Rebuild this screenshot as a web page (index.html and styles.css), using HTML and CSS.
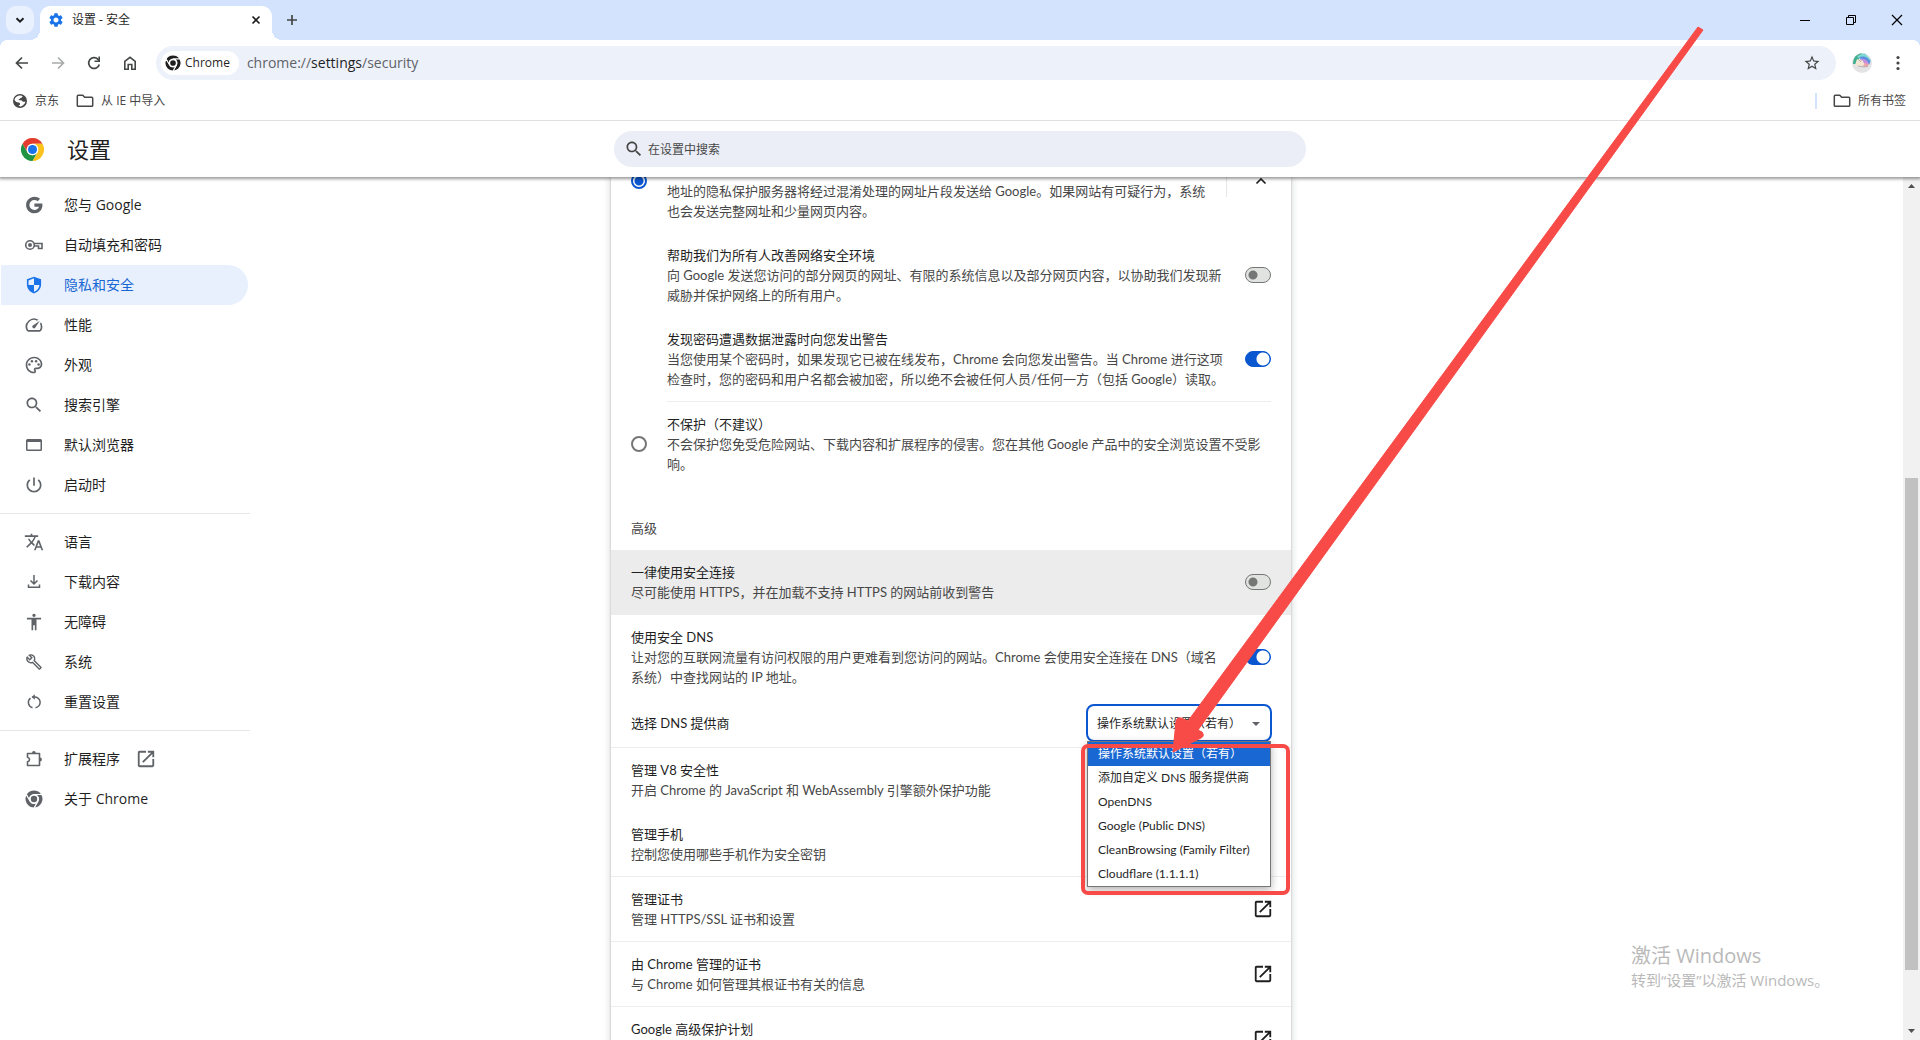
FILE: index.html
```html
<!DOCTYPE html>
<html lang="zh-CN">
<head>
<meta charset="utf-8">
<title>设置 - 安全</title>
<link rel="stylesheet" href="styles.css">
</head>
<body>
<svg class="sprite" aria-hidden="true">
  <symbol id="google" viewBox="0 0 24 24"><path d="M12.5 10.2v3.9h5.5c-.7 2.3-2.700 3.900-5.500 3.900a6 6 0 1 1 0-12c1.500 0 2.900.5 3.900 1.400l2.900-2.800A10 10 0 0 0 12.500 2C7 2 2.500 6.500 2.500 12s4.500 10 10 10c8.400 0 10.300-7.800 9.500-11.800z"/></symbol>
  <symbol id="key" viewBox="0 0 20 20"><g fill="none" stroke="currentColor" stroke-width="1.600"><circle cx="6" cy="10" r="4.300"/><path d="M10 8.500h8v5h-3.500v-2.500H10"/></g><circle cx="6" cy="10" r="2"/></symbol>
  <symbol id="shield" viewBox="0 0 24 24"><path d="M12 2 3.500 5.200v6.300c0 5 3.600 9.300 8.500 10.700 4.900-1.400 8.500-5.700 8.500-10.700V5.200zM12 12h6.600c-.5 3.800-3 7-6.600 8.200V12H5.400V6.500L12 4z"/></symbol>
  <symbol id="speed" viewBox="0 0 24 24"><path d="M20.380 8.570l-1.230 1.850a8 8 0 0 1-.22 7.580H5.070A8 8 0 0 1 15.580 6.850l1.850-1.230A10 10 0 0 0 3.350 19a2 2 0 0 0 1.720 1h13.850a2 2 0 0 0 1.740-1 10 10 0 0 0-.27-10.440zm-9.790 6.840a2 2 0 0 0 2.830 0l5.660-8.490-8.490 5.660a2 2 0 0 0 0 2.830z"/></symbol>
  <symbol id="palette" viewBox="0 0 24 24"><path d="M12 22C6.490 22 2 17.510 2 12S6.490 2 12 2s10 4.040 10 9c0 3.310-2.690 6-6 6h-1.770c-.28 0-.5.22-.5.5 0 .12.05.23.13.33.41.47.64 1.060.64 1.670 0 1.380-1.120 2.500-2.500 2.500zm0-18c-4.410 0-8 3.590-8 8s3.590 8 8 8c.28 0 .5-.22.5-.5a.54.54 0 0 0-.14-.35c-.41-.46-.63-1.050-.63-1.650 0-1.380 1.120-2.500 2.500-2.500H16c2.210 0 4-1.790 4-4 0-3.860-3.590-7-8-7z"/><circle cx="6.500" cy="11.500" r="1.500"/><circle cx="9.500" cy="7.500" r="1.500"/><circle cx="14.500" cy="7.500" r="1.500"/><circle cx="17.500" cy="11.500" r="1.500"/></symbol>
  <symbol id="search" viewBox="0 0 24 24"><path d="M15.500 14h-.79l-.28-.27C15.410 12.590 16 11.110 16 9.500 16 5.910 13.090 3 9.500 3S3 5.910 3 9.500 5.910 16 9.500 16c1.610 0 3.090-.59 4.230-1.570l.27.28v.79l5 4.990L20.490 19l-4.990-5zm-6 0C7.010 14 5 11.990 5 9.500S7.010 5 9.500 5 14 7.010 14 9.500 11.990 14 9.500 14z"/></symbol>
  <symbol id="window" viewBox="0 0 20 20"><path fill-rule="evenodd" d="M3.500 4h13A1.500 1.500 0 0 1 18 5.500v9a1.500 1.500 0 0 1-1.500 1.500h-13A1.500 1.500 0 0 1 2 14.500v-9A1.500 1.500 0 0 1 3.500 4zM3.500 7v7.500h13V7z"/></symbol>
  <symbol id="power" viewBox="0 0 24 24"><path d="M13 3h-2v10h2V3zm4.830 2.170l-1.420 1.420C17.990 7.860 19 9.810 19 12c0 3.870-3.130 7-7 7s-7-3.130-7-7c0-2.190 1.010-4.140 2.580-5.420L6.170 5.170C4.230 6.820 3 9.260 3 12c0 4.970 4.030 9 9 9s9-4.030 9-9c0-2.740-1.230-5.180-3.170-6.830z"/></symbol>
  <symbol id="translate" viewBox="0 0 24 24"><path d="M12.870 15.070l-2.540-2.510.03-.03c1.740-1.940 2.980-4.170 3.710-6.530H17V4h-7V2H8v2H1v1.990h11.170C11.500 7.920 10.440 9.750 9 11.350 8.070 10.320 7.300 9.190 6.690 8h-2c.73 1.630 1.730 3.170 2.980 4.560l-5.090 5.020L4 19l5-5 3.110 3.110.76-2.040zM18.500 10h-2L12 22h2l1.120-3h4.750L21 22h2l-4.500-12zm-2.620 7l1.620-4.330L19.120 17h-3.240z"/></symbol>
  <symbol id="download" viewBox="0 0 20 20"><path fill="none" stroke="currentColor" stroke-width="1.500" d="M10 3v9M6.500 8.500 10 12l3.500-3.500M4.500 12.500v2.700h11v-2.700"/></symbol>
  <symbol id="person" viewBox="0 0 24 24"><path d="M12 2c1.100 0 2 .9 2 2s-.9 2-2 2-2-.9-2-2 .9-2 2-2zm8.500 7H15v13h-2v-6h-2v6H9V9H3.500V7h17v2z"/></symbol>
  <symbol id="wrench" viewBox="-2 -2 28 28"><path d="M22.610 18.990l-9.080-9.080c.93-2.340.45-5.100-1.440-7C9.790.61 6.210.4 3.660 2.260L7.500 6.110 6.080 7.520 2.250 3.690C.39 6.230.6 9.820 2.900 12.110c1.860 1.860 4.570 2.350 6.890 1.480l9.110 9.110c.39.39 1.020.39 1.410 0l2.300-2.300c.4-.38.4-1.010 0-1.410zm-3 1.600l-9.460-9.460c-.61.45-1.290.72-2 .82-1.360.2-2.790-.21-3.830-1.250C3.370 9.760 2.930 8.500 3 7.260l3.090 3.090 4.240-4.240-3.090-3.090c1.240-.07 2.490.37 3.440 1.310 1.080 1.080 1.490 2.570 1.240 3.960-.12.71-.42 1.370-.88 1.960l9.450 9.450-.88.89z"/></symbol>
  <symbol id="reset" viewBox="0 0 20 20"><path fill="none" stroke="currentColor" stroke-width="1.500" d="M6.500 6.200A5.400 5.400 0 0 0 8.500 15.700M11.500 15.700A5.400 5.400 0 0 0 10 5H8.500"/><path d="M10.800 2.200v5.600L7.500 5z"/></symbol>
  <symbol id="puzzle" viewBox="0 0 20 20"><path fill="none" stroke="currentColor" stroke-width="1.600" stroke-linejoin="round" d="M3.500 4.500h12v12h-12v-3.700c2.700-.8 2.700-3.800 0-4.600z"/><path d="M8 4a1.900 1.900 0 0 1 3.800 0zM16 8.600a1.900 1.900 0 0 1 0 3.800z"/></symbol>
  <symbol id="launch" viewBox="1 1 22 22"><path d="M19 19H5V5h7V3H5c-1.110 0-2 .9-2 2v14c0 1.100.89 2 2 2h14c1.100 0 2-.9 2-2v-7h-2v7zM14 3v2h3.590l-9.830 9.830 1.410 1.410L19 6.410V10h2V3h-7z"/></symbol>
  <symbol id="gear" viewBox="2 2 20 20"><path d="M19.140 12.940c.04-.3.06-.61.06-.94 0-.32-.02-.64-.07-.94l2.030-1.580c.18-.14.23-.41.12-.61l-1.920-3.320c-.12-.22-.37-.29-.59-.22l-2.390.96c-.5-.38-1.030-.7-1.620-.94l-.36-2.540c-.04-.24-.24-.41-.48-.41h-3.840c-.24 0-.43.17-.47.41l-.36 2.540c-.59.24-1.130.57-1.620.94l-2.390-.96c-.22-.08-.47 0-.59.22L2.740 8.870c-.12.21-.08.47.12.61l2.030 1.580c-.05.3-.09.63-.09.94s.02.64.07.94l-2.030 1.580c-.18.14-.23.41-.12.61l1.920 3.320c.12.22.37.29.59.22l2.390-.96c.5.38 1.030.7 1.620.94l.36 2.540c.05.24.24.41.48.41h3.840c.24 0 .44-.17.47-.41l.36-2.540c.59-.24 1.130-.56 1.620-.94l2.390.96c.22.08.47 0 .59-.22l1.920-3.320c.12-.22.07-.47-.12-.61l-2.010-1.580zM12 15.600c-1.980 0-3.600-1.620-3.600-3.600s1.620-3.600 3.600-3.600 3.600 1.620 3.600 3.600-1.620 3.600-3.600 3.600z"/></symbol>
  <symbol id="chrome" viewBox="0 0 48 48"><g stroke="#fff" stroke-width="3"><path d="M24 12H44.785A24 24 0 0 0 3.215 12L13.608 30A12 12 0 0 1 24 12z"/><path transform="rotate(120 24 24)" d="M24 12H44.785A24 24 0 0 0 3.215 12L13.608 30A12 12 0 0 1 24 12z"/><path transform="rotate(240 24 24)" d="M24 12H44.785A24 24 0 0 0 3.215 12L13.608 30A12 12 0 0 1 24 12z"/></g><circle cx="24" cy="24" r="12" fill="#fff"/><circle cx="24" cy="24" r="8.500"/></symbol>
  <symbol id="logo" viewBox="0 0 48 48"><path fill="#e33b2e" d="M24 12H44.785A24 24 0 0 0 3.215 12L13.608 30A12 12 0 0 1 24 12z"/><path fill="#fcc31e" transform="rotate(120 24 24)" d="M24 12H44.785A24 24 0 0 0 3.215 12L13.608 30A12 12 0 0 1 24 12z"/><path fill="#229342" transform="rotate(240 24 24)" d="M24 12H44.785A24 24 0 0 0 3.215 12L13.608 30A12 12 0 0 1 24 12z"/><circle cx="24" cy="24" r="12" fill="#fff"/><circle cx="24" cy="24" r="9.500" fill="#1a73e8"/></symbol>
  <symbol id="star" viewBox="0 0 24 24"><path d="M22 9.240l-7.190-.62L12 2 9.190 8.630 2 9.240l5.460 4.730L5.820 21 12 17.270 18.180 21l-1.630-7.030L22 9.240zM12 15.400l-3.760 2.270 1-4.280-3.320-2.880 4.380-.38L12 6.100l1.710 4.040 4.380.38-3.320 2.880 1 4.280L12 15.400z"/></symbol>
  <symbol id="globe" viewBox="0 0 16 16"><circle cx="8" cy="8" r="7"/><path fill="#fff" d="M8.500 2.500 10.500 3c0 1.300-.8 1.800-2.200 2C8.300 6.200 7 6 6.500 6.500c0 1 1.500.5 2.500.8 1.200.3 1.300 1.400 2.200 1.500.9.200 1.800-.3 2.200-.2-.3 2-1.500 3.500-3.400 4.400-1.600.7-3.200.3-3.400-.2.400-.7 1.500-.6 1.500-1.800 0-1-.7-1.600-1.800-1.600C4.800 9.400 3.300 8.300 2.500 7c.3-2.400 2.800-4.800 6-4.500z"/></symbol>
  <symbol id="folder" viewBox="0 0 18 16"><path fill="none" stroke="currentColor" stroke-width="1.500" stroke-linejoin="round" d="M2.200 2.300h4.600l1.800 2h7.200c.5 0 .9.400.9.900v7.200c0 .5-.4.900-.9.900H2.200c-.5 0-.9-.4-.9-.9V3.200c0-.5.4-.9.900-.9z"/></symbol>
  <symbol id="back" viewBox="0 0 16 16"><path fill="none" stroke="currentColor" stroke-width="1.700" d="M14 8H3M8 2.500 2.500 8 8 13.500"/></symbol>
  <symbol id="reload" viewBox="0 0 16 16"><path fill="none" stroke="currentColor" stroke-width="1.700" d="M13.300 9.500A5.400 5.400 0 1 1 12 4.300l1.300 1.500"/><path d="M14 1.500V7H8.500V5.400h3.900V1.500z"/></symbol>
  <symbol id="home" viewBox="0 0 16 16"><path fill="none" stroke="currentColor" stroke-width="1.600" d="M2.800 6.300 8 2.300l5.200 4v7.900H9.800V9.500H6.200v4.700H2.800z"/></symbol>
</svg>

<header class="browser">
  <div class="tabstrip">
    <button class="tab-search" aria-label="搜索标签页"><svg width="10" height="10" viewBox="0 0 10 10"><path fill="none" stroke="currentColor" stroke-width="2" d="M1.500 3.200 5 6.700l3.500-3.500"/></svg></button>
    <div class="tab">
      <svg class="tab-icon" width="14" height="14"><use href="#gear"/></svg>
      <span class="tab-title">设置 - 安全</span>
      <button class="plain" aria-label="关闭标签页"><svg width="10" height="10" viewBox="0 0 10 10"><path stroke="currentColor" stroke-width="1.600" d="m1.500 1.500 7 7m0-7-7 7"/></svg></button>
    </div>
    <button class="plain new-tab" aria-label="打开新的标签页"><svg width="12" height="12" viewBox="0 0 12 12"><path stroke="currentColor" stroke-width="1.700" d="M6 1v10M1 6h10"/></svg></button>
    <div class="window-buttons">
      <button aria-label="最小化"><svg width="10" height="10" viewBox="0 0 10 10"><path stroke="currentColor" d="M0 5.500h10"/></svg></button>
      <button aria-label="还原"><svg width="10" height="10" viewBox="0 0 10 10"><path fill="none" stroke="currentColor" d="M.5 2.500h7v7h-7zM2.500 2.500v-2h7v7h-2"/></svg></button>
      <button aria-label="关闭"><svg width="12" height="12" viewBox="0 0 12 12"><path stroke="currentColor" stroke-width="1.200" d="m1 1 10 10M11 1 1 11"/></svg></button>
    </div>
  </div>
  <div class="toolbar">
    <div class="nav-buttons">
      <button class="plain" aria-label="返回"><svg width="16" height="16"><use href="#back"/></svg></button>
      <button class="plain forward" aria-label="前进" disabled><svg width="16" height="16"><use href="#back"/></svg></button>
      <button class="plain" aria-label="重新加载"><svg width="16" height="16"><use href="#reload"/></svg></button>
      <button class="plain" aria-label="主页"><svg width="16" height="16"><use href="#home"/></svg></button>
    </div>
    <div class="omnibox">
      <button class="chip"><svg width="16" height="16"><use href="#chrome"/></svg>Chrome</button>
      <span class="url">chrome://<b>settings</b>/security</span>
      <button class="plain bookmark-star" aria-label="为此标签页添加书签"><svg width="18" height="18"><use href="#star"/></svg></button>
    </div>
    <button class="plain avatar" aria-label="个人资料"><svg width="20" height="20" viewBox="0 0 20 20"><circle cx="10" cy="10" r="10" fill="#e4e4e6"/><path fill="#3fae8c" d="M1 11C1 4.500 5 .8 10 .3L7 6l-3 5z"/><path fill="#7fd8d2" d="M5 4C7 1.500 10 .3 13 .6L19 7l-2 4z"/><path fill="#5a8fe0" d="M7 4.500C11 2 16 4 18.500 8.500L17 12l-4-4z"/><path fill="#c48fe0" d="M8 6c4-1 8 1.500 9 5l-2 1-6-3z"/><path fill="#f0a3a8" d="M12 10l5 1-2 3-4-1z"/><path fill="#f3e6d2" d="m5 6 2.500 1 3 .5 2 3.500-4 3-3.500-1L3 12z"/><path fill="none" stroke="#a9a2a0" stroke-width=".8" d="m6 13 6 1 4-1m-9-6 2 2"/></svg></button>
    <button class="plain" aria-label="自定义及控制"><svg width="16" height="16" viewBox="0 0 16 16"><circle cx="8" cy="2.500" r="1.600"/><circle cx="8" cy="8" r="1.600"/><circle cx="8" cy="13.500" r="1.600"/></svg></button>
  </div>
  <nav class="bookmarks" aria-label="书签栏">
    <a href="#jd"><svg width="16" height="16"><use href="#globe"/></svg>京东</a>
    <a href="#ie"><svg width="18" height="16"><use href="#folder"/></svg>从 IE 中导入</a>
    <a class="all" href="#all"><svg width="18" height="16"><use href="#folder"/></svg>所有书签</a>
  </nav>
</header>

<header class="settings-header">
  <div class="brand"><svg width="23" height="23"><use href="#logo"/></svg><h1>设置</h1></div>
  <label class="search"><svg width="20" height="20"><use href="#search"/></svg><input type="text" placeholder="在设置中搜索" aria-label="在设置中搜索"></label>
</header>

<div class="viewport">
  <div class="page">
    <nav class="sidebar" aria-label="设置">
      <a href="#people"><svg><use href="#google"/></svg><span>您与 <b>Google</b></span></a>
      <a href="#autofill"><svg><use href="#key"/></svg>自动填充和密码</a>
      <a href="#privacy" class="selected" aria-current="page"><svg><use href="#shield"/></svg>隐私和安全</a>
      <a href="#performance"><svg><use href="#speed"/></svg>性能</a>
      <a href="#appearance"><svg><use href="#palette"/></svg>外观</a>
      <a href="#searchengine"><svg><use href="#search"/></svg>搜索引擎</a>
      <a href="#default"><svg><use href="#window"/></svg>默认浏览器</a>
      <a href="#startup"><svg><use href="#power"/></svg>启动时</a>
      <hr>
      <a href="#languages"><svg><use href="#translate"/></svg>语言</a>
      <a href="#downloads"><svg><use href="#download"/></svg>下载内容</a>
      <a href="#a11y"><svg><use href="#person"/></svg>无障碍</a>
      <a href="#system"><svg><use href="#wrench"/></svg>系统</a>
      <a href="#reset-settings"><svg><use href="#reset"/></svg>重置设置</a>
      <hr>
      <a href="#extensions"><svg><use href="#puzzle"/></svg>扩展程序<svg class="trailing"><use href="#launch"/></svg></a>
      <a href="#about"><svg class="small"><use href="#chrome"/></svg><span>关于 <b>Chrome</b></span></a>
    </nav>

    <main class="card">
      <div class="row scrolled">
        <input class="radio" type="radio" name="protection" id="standard" checked>
        <label class="text" for="standard"><span class="desc">地址的隐私保护服务器将经过混淆处理的网址片段发送给 Google。如果网站有可疑行为，系统<br>也会发送完整网址和少量网页内容。</span></label>
        <button class="plain expander" aria-label="收起"><svg width="12" height="12" viewBox="0 0 12 12"><path fill="none" stroke="currentColor" stroke-width="1.700" d="M1.500 8.500 6 4l4.500 4.500"/></svg></button>
      </div>
      <div class="row nested">
        <label class="text" for="improve">帮助我们为所有人改善网络安全环境<span class="desc">向 Google 发送您访问的部分网页的网址、有限的系统信息以及部分网页内容，以协助我们发现新<br>威胁并保护网络上的所有用户。</span></label>
        <input class="toggle" type="checkbox" id="improve">
      </div>
      <div class="row nested">
        <label class="text" for="leak">发现密码遭遇数据泄露时向您发出警告<span class="desc">当您使用某个密码时，如果发现它已被在线发布，Chrome 会向您发出警告。当 Chrome 进行这项<br>检查时，您的密码和用户名都会被加密，所以绝不会被任何人员/任何一方（包括 Google）读取。</span></label>
        <input class="toggle" type="checkbox" id="leak" checked>
      </div>
      <hr class="inset">
      <div class="row">
        <input class="radio" type="radio" name="protection" id="none">
        <label class="text" for="none">不保护（不建议）<span class="desc">不会保护您免受危险网站、下载内容和扩展程序的侵害。您在其他 Google 产品中的安全浏览设置不受影<br>响。</span></label>
      </div>
      <h2>高级</h2>
      <div class="row highlighted">
        <label class="text" for="https">一律使用安全连接<span class="desc">尽可能使用 HTTPS，并在加载不支持 HTTPS 的网站前收到警告</span></label>
        <input class="toggle" type="checkbox" id="https">
      </div>
      <div class="row">
        <label class="text" for="dns">使用安全 DNS<span class="desc">让对您的互联网流量有访问权限的用户更难看到您访问的网站。Chrome 会使用安全连接在 DNS（域名<br>系统）中查找网站的 IP 地址。</span></label>
        <input class="toggle" type="checkbox" id="dns" checked>
      </div>
      <div class="row provider">
        <label class="text" for="resolver">选择 DNS 提供商</label>
        <div class="dropdown">
          <select id="resolver"><option>操作系统默认设置（若有）</option></select>
          <ul class="popup" role="listbox" aria-label="DNS 提供商">
            <li role="option" aria-selected="true">操作系统默认设置（若有）</li>
            <li role="option">添加自定义 DNS 服务提供商</li>
            <li role="option">OpenDNS</li>
            <li role="option">Google (Public DNS)</li>
            <li role="option">CleanBrowsing (Family Filter)</li>
            <li role="option">Cloudflare (1.1.1.1)</li>
          </ul>
        </div>
      </div>
      <a class="row ruled" href="#v8"><span class="text">管理 V8 安全性<span class="desc">开启 Chrome 的 JavaScript 和 WebAssembly 引擎额外保护功能</span></span></a>
      <a class="row" href="#phones"><span class="text">管理手机<span class="desc">控制您使用哪些手机作为安全密钥</span></span></a>
      <a class="row ruled" href="#certs"><span class="text">管理证书<span class="desc">管理 HTTPS/SSL 证书和设置</span></span><svg class="launch"><use href="#launch"/></svg></a>
      <a class="row ruled" href="#root"><span class="text">由 Chrome 管理的证书<span class="desc">与 Chrome 如何管理其根证书有关的信息</span></span><svg class="launch"><use href="#launch"/></svg></a>
      <a class="row ruled last" href="#advanced"><span class="text">Google 高级保护计划</span><svg class="launch"><use href="#launch"/></svg></a>
    </main>
  </div>
  <div class="scrollbar" aria-hidden="true">
    <svg width="17" height="17" viewBox="0 0 17 17"><path d="M5 11h7L8.500 7z"/></svg>
    <div class="thumb"></div>
    <svg class="down" width="17" height="17" viewBox="0 0 17 17"><path d="M5 6h7l-3.500 4z"/></svg>
  </div>
</div>

<aside class="watermark"><strong>激活 Windows</strong><span>转到“设置”以激活 Windows。</span></aside>

<svg class="annotation" width="1920" height="1040" viewBox="0 0 1920 1040" aria-hidden="true">
  <rect x="1083" y="746" width="205" height="147" rx="5" fill="none" stroke="#f84b47" stroke-width="4"/>
  <path fill="#f84b47" stroke="#f84b47" stroke-linejoin="round" d="M1698 27 1703 30 1198 730 1202 732Q1205 736 1201 738L1173 752 1176 721Q1177 717 1181 718L1188 721z"/>
</svg>
</body>
</html>
```
FILE: styles.css
```css
* { box-sizing: border-box; }

body {
  margin: 0;
  height: 100vh;
  display: flex;
  flex-direction: column;
  overflow: hidden;
  position: relative;
  background: #fff;
  color: #1f1f1f;
  font: 13px/20px "Open Sans", "Noto Sans CJK SC", sans-serif;
}

a { color: inherit; text-decoration: none; }
svg { fill: currentColor; flex: none; display: block; }
button, input, select { font: inherit; color: inherit; margin: 0; }
.sprite { position: absolute; width: 0; height: 0; }

.plain {
  display: flex;
  align-items: center;
  justify-content: center;
  padding: 0;
  border: 0;
  background: none;
}

/* Browser frame */
.browser { flex: none; border-bottom: 1px solid #dedfe0; font-size: 12px; }

.tabstrip {
  display: flex;
  height: 40px;
  padding-left: 6px;
  background: #d3e3fd;
}

.tab-search {
  display: flex;
  align-items: center;
  justify-content: center;
  width: 28px;
  height: 28px;
  margin: 6px 6px 0 0;
  padding: 0;
  border: 0;
  border-radius: 10px;
  background: #e9f1fe;
}

.tab {
  position: relative;
  display: flex;
  align-items: center;
  width: 232px;
  margin-top: 6px;
  padding: 0 11px 6px 9px;
  border-radius: 10px 10px 0 0;
  background: #fff;
}

.tab::before, .tab::after {
  content: "";
  position: absolute;
  bottom: 0;
  width: 10px;
  height: 10px;
}
.tab::before { left: -10px; background: radial-gradient(circle at 0 0, transparent 10px, #fff 10px); }
.tab::after { right: -10px; background: radial-gradient(circle at 100% 0, transparent 10px, #fff 10px); }
.tab-icon { color: #1a73e8; }
.tab-title { flex: 1; margin-left: 9px; }
.new-tab { width: 40px; height: 28px; margin-top: 6px; color: #444746; }
.window-buttons { display: flex; margin-left: auto; }

.window-buttons button {
  display: flex;
  align-items: center;
  justify-content: center;
  width: 46px;
  padding: 0;
  border: 0;
  background: none;
  color: #000;
}

.toolbar {
  display: flex;
  align-items: center;
  height: 46px;
  padding: 0 14px;
  background:
    radial-gradient(circle at 8px 8px, #fff 8px, #d3e3fd 8px) 0 0 / 8px 8px no-repeat,
    radial-gradient(circle at 0 8px, #fff 8px, #d3e3fd 8px) 100% 0 / 8px 8px no-repeat;
  color: #444746;
}

.nav-buttons { display: flex; gap: 20px; margin-right: 18px; }
.forward { color: #a9abab; }
.forward svg { transform: scaleX(-1); }

.omnibox {
  flex: 1;
  display: flex;
  align-items: center;
  height: 34px;
  padding: 0 15px 0 5px;
  border-radius: 17px;
  background: #edf1fa;
}

.chip {
  display: flex;
  align-items: center;
  gap: 4px;
  height: 24px;
  padding: 0 9px 0 4px;
  border: 0;
  border-radius: 12px;
  background: #fff;
  color: #1f1f1f;
}

.url { flex: 1; margin-left: 8px; font-size: 14px; color: #5f6368; }
.url b { font-weight: 400; color: #1f1f1f; }
.avatar { margin: 0 18px 0 16px; }

.bookmarks {
  display: flex;
  align-items: center;
  gap: 17px;
  height: 34px;
  padding: 0 14px 4px 12px;
  color: #474747;
}

.bookmarks a { display: flex; align-items: center; gap: 7px; }
.bookmarks .all { margin-left: auto; padding-left: 16px; border-left: 2px solid #d3e3fd; line-height: 16px; }

/* Settings header */
.settings-header {
  position: relative;
  z-index: 2;
  display: grid;
  grid-template-columns: 1fr minmax(0, 692px) 1fr;
  align-items: center;
  height: 56px;
  flex: none;
  background: #fff;
  box-shadow: 0 1px 3px 1px rgba(0, 0, 0, 0.4);
  clip-path: inset(0 0 -8px 0);
}

.brand { display: flex; align-items: center; gap: 23px; padding-left: 21px; }
h1 { margin: 0; font-size: 22px; line-height: 28px; font-weight: 400; }

.search {
  display: flex;
  align-items: center;
  gap: 4px;
  height: 36px;
  padding: 0 10px;
  border-radius: 18px;
  background: #ebeef7;
  color: #474747;
}

.search input { flex: 1; padding: 2px 0 0; border: 0; outline: 0; background: none; font-size: 12px; }
.search input::placeholder { color: #474747; }

/* Scrolling area */
.viewport { flex: 1; min-height: 0; display: flex; overflow: hidden; }

.page {
  flex: 1;
  display: grid;
  grid-template-columns: 1fr minmax(0, 680px) 1fr;
  align-items: start;
  padding-right: 1px;
}

.sidebar { width: 250px; padding-top: 8px; font-size: 14px; }
.sidebar b { font-weight: 500; }

.sidebar a {
  display: flex;
  align-items: center;
  gap: 20px;
  height: 40px;
  margin: 0 2px 0 1px;
  padding-left: 23px;
  border-radius: 0 20px 20px 0;
}

.sidebar svg { width: 20px; height: 20px; color: #5f6368; }
.sidebar .small { padding: 1px; }
.sidebar .trailing { margin-left: -4px; }
.sidebar .selected { background: #e8f0fe; color: #1967d2; }
.sidebar .selected svg { color: #1a73e8; }

hr { height: 1px; margin: 8px 0; border: 0; background: #e6e6e6; }
hr.inset { margin: 0 20px 0 56px; background: #ededed; }

.card {
  background: #fff;
  font-family: Lato, "Noto Sans CJK SC", sans-serif;
  box-shadow: 0 1px 2px rgba(60, 64, 67, 0.3), 0 2px 6px 2px rgba(60, 64, 67, 0.15);
}

.row { display: flex; align-items: center; padding: 12px 20px; }
.row.nested { padding-left: 56px; }
.row.highlighted { background: #ececec; border-bottom: 1px solid #ececec; }
.row.ruled { border-top: 1px solid #ededed; }
.row.last { height: 65px; }
.row.last .text { align-self: flex-start; }

/* The standard-protection row is partly scrolled under the header. */
.row.scrolled { height: 104px; margin-top: -48px; }
.row.scrolled .text { align-self: flex-end; }

.text { flex: 1; white-space: nowrap; }
.desc { display: block; color: #474747; }

.card h2 {
  margin: 0;
  padding: 32px 20px 12px;
  font-size: 13px;
  font-weight: 400;
  color: #474747;
}

.radio {
  appearance: none;
  flex: none;
  width: 16px;
  height: 16px;
  margin-right: 20px;
  border: 2px solid #747775;
  border-radius: 50%;
}
.radio:checked { border-color: #0b57d0; background: radial-gradient(circle, #0b57d0 4px, transparent 5px); }

.expander { width: 45px; height: 32px; padding-left: 24px; border-left: 1px solid #e6e6e6; }

.toggle {
  appearance: none;
  flex: none;
  width: 26px;
  height: 16px;
  border: 1px solid #747775;
  border-radius: 8px;
  background: radial-gradient(circle at 7px 7px, #747775 4px, transparent 5px) #e1e3e1;
}
.toggle:checked {
  border-color: #0b57d0;
  background: radial-gradient(circle at 17px 7px, #fff 6px, transparent 7px) #0b57d0;
}

.launch { width: 20px; height: 20px; margin: 0 -2px; }

/* DNS provider menu */
.provider { height: 48px; }
.dropdown { position: relative; width: 186px; margin-right: -1px; font-size: 12px; }

.dropdown select {
  appearance: none;
  display: block;
  width: 100%;
  height: 38px;
  padding: 2px 9px 0;
  border: 2px solid #0b57d0;
  border-radius: 8px;
  outline: 0;
  background: #fff;
}

.dropdown::after {
  content: "";
  position: absolute;
  right: 12px;
  top: 18px;
  border: 4px solid transparent;
  border-top-color: #5f6368;
  border-bottom: 0;
}

.popup {
  position: absolute;
  z-index: 1;
  top: 37px;
  left: 1px;
  right: 1px;
  margin: 0;
  padding: 0;
  list-style: none;
  border: 1px solid #767676;
  background: #fff;
  box-shadow: 0 3px 8px rgba(0, 0, 0, 0.3);
}

.popup li { padding: 0 10px; line-height: 24px; white-space: nowrap; }
.popup li[aria-selected="true"] { background: #1967d2; color: #fff; }

/* Drawn scrollbar */
.scrollbar {
  display: grid;
  grid-template-rows: 17px 284fr 492fr 53fr 17px;
  width: 17px;
  background: #f1f1f1;
  color: #505050;
}
.thumb { grid-row: 3; margin: 0 2px; background: #c1c1c1; }
.scrollbar .down { grid-row: 5; }

.watermark {
  position: absolute;
  right: 92px;
  bottom: 50px;
  display: flex;
  flex-direction: column;
  width: 197px;
  color: #b9b9b9;
  font-size: 15px;
  white-space: nowrap;
}
.watermark strong { font-size: 20px; line-height: 28px; font-weight: 400; }

.annotation { position: absolute; z-index: 3; top: 0; left: 0; pointer-events: none; }
```
